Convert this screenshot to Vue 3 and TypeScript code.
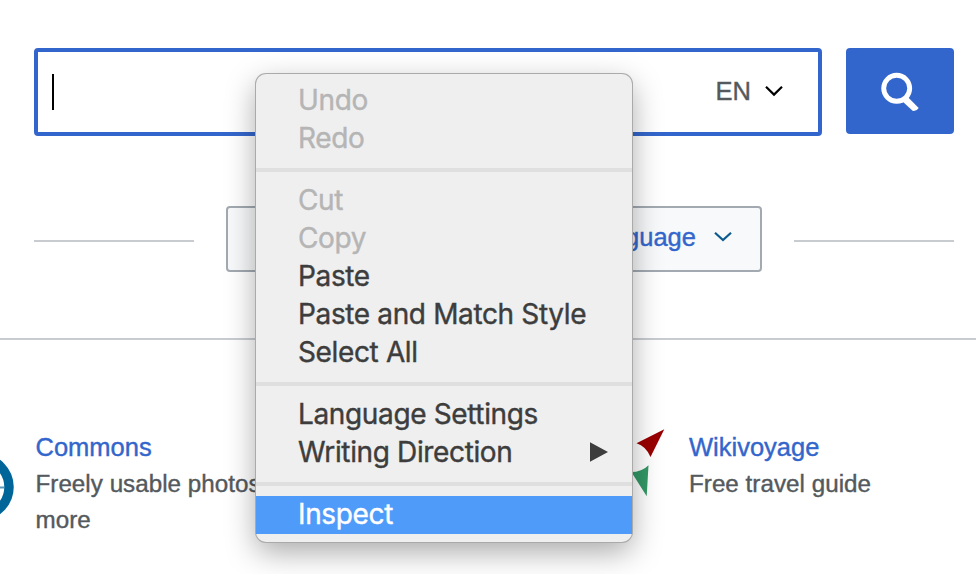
<script setup lang="ts">
interface MenuItem {
  label: string
  state?: 'disabled' | 'active'
  submenu?: boolean
}

const groups: MenuItem[][] = [
  [
    { label: 'Undo', state: 'disabled' },
    { label: 'Redo', state: 'disabled' },
  ],
  [
    { label: 'Cut', state: 'disabled' },
    { label: 'Copy', state: 'disabled' },
    { label: 'Paste' },
    { label: 'Paste and Match Style' },
    { label: 'Select All' },
  ],
  [
    { label: 'Language Settings' },
    { label: 'Writing Direction', submenu: true },
  ],
  [{ label: 'Inspect', state: 'active' }],
]
</script>

<template>
  <main class="page">
    <form class="search" @submit.prevent>
      <div class="field">
        <span class="caret"></span>
        <span class="lang">EN</span>
        <svg class="chevron" width="20" height="12" viewBox="0 0 20 12">
          <path d="M2 1.8 10 9.6 18 1.8" />
        </svg>
      </div>
      <button class="submit" type="submit" aria-label="Search">
        <svg width="40" height="40" viewBox="0 0 40 40">
          <circle cx="16.7" cy="17.3" r="13" />
          <path class="handle" d="M22.3 30.2 27.8 26 38.7 36.900Q36.3 40.600 32.600 39.800Z" />
        </svg>
      </button>
    </form>

    <div class="languages">
      <span class="rule"></span>
      <button class="lang-button" type="button">
        <span>language</span>
        <svg class="chevron" width="20" height="12" viewBox="0 0 20 12">
          <path d="M2 1.8 10 9 18 1.8" />
        </svg>
      </button>
      <span class="rule"></span>
    </div>

    <section class="projects">
      <article class="project">
        <svg class="logo commons" width="36" height="72" viewBox="0 0 36 72">
          <circle cx="2" cy="36" r="29" />
          <path d="M14 36.5H26" />
        </svg>
        <div class="text">
          <a class="name">Commons</a>
          <p>Freely usable photos<br />more</p>
        </div>
      </article>
      <article class="project">
        <svg class="logo voyage" width="40" height="72" viewBox="0 0 40 72">
          <path fill="#900" d="M12.500 14.300 40.300 .3 26.500 28Q22 17.300 12.500 14.300Z" />
          <path fill="#396" d="M4 43Q17 44 24.500 36.300L22.700 67.300 8 44Z" />
        </svg>
        <div class="text">
          <a class="name">Wikivoyage</a>
          <p>Free travel guide</p>
        </div>
      </article>
    </section>

    <nav class="menu">
      <ul v-for="(group, i) in groups" :key="i" class="group">
        <li v-for="item in group" :key="item.label" class="item" :class="item.state">
          <span>{{ item.label }}</span>
          <svg v-if="item.submenu" width="18" height="20" viewBox="0 0 18 20">
            <path d="M0 .3 18 10 0 19.700Z" />
          </svg>
        </li>
      </ul>
    </nav>
  </main>
</template>

<style>
body {
  overflow: hidden;
}
</style>

<style scoped>
.page {
  position: relative;
  box-sizing: border-box;
  width: 976px;
  height: 574px;
  padding-top: 48px;
  overflow: hidden;
  background: #fff;
  color: #54595d;
  font: 25.5px/36px "Liberation Sans", Arial, sans-serif;
  -webkit-text-stroke: 0.4px currentColor;
}
.search {
  display: flex;
  align-items: flex-start;
  gap: 24px;
  padding: 0 22px 0 34px;
}
.field {
  flex: 1;
  box-sizing: border-box;
  height: 88px;
  display: flex;
  align-items: center;
  padding: 0 34px 0 14px;
  border: 4px solid #36c;
  border-radius: 4px;
}
.caret {
  width: 2px;
  height: 36px;
  background: #000;
  margin-right: auto;
}
.lang {
  margin-right: 13px;
  padding-bottom: 2px;
}
.chevron {
  fill: none;
  stroke: #000;
  stroke-width: 2.2;
}
.field .chevron {
  margin-bottom: 2px;
}
.submit {
  width: 108px;
  height: 86px;
  display: grid;
  place-items: center;
  padding: 0;
  border: 0;
  border-radius: 4px;
  background: #36c;
}
.submit circle {
  fill: none;
  stroke: #fff;
  stroke-width: 4.900;
}
.handle {
  fill: #fff;
}
.languages {
  display: flex;
  align-items: center;
  gap: 32px;
  margin: 70px 22px 0 34px;
}
.rule {
  flex: 1;
  height: 2px;
  margin-top: 3px;
  background: #c8ccd1;
}
.lang-button {
  box-sizing: border-box;
  width: 536px;
  height: 66px;
  display: flex;
  align-items: center;
  justify-content: flex-end;
  gap: 17px;
  padding: 0 27px 4px 0;
  border: 2px solid #a2a9b1;
  border-radius: 4px;
  background: #f8f9fa;
  color: #36c;
  font: inherit;
}
.lang-button .chevron {
  stroke: #0b5b91;
}
.projects {
  display: flex;
  margin-top: 66px;
  padding-top: 89px;
  border-top: 2px solid #c8ccd1;
}
.project {
  flex: none;
  display: flex;
  width: 374px;
}
.project:first-child {
  width: 624px;
  margin-left: -22px;
}
.logo {
  flex: none;
  margin-right: 21.5px;
}
.commons {
  margin-top: 22px;
}
.commons circle {
  fill: none;
  stroke: #069;
  stroke-width: 9.500;
}
.commons path {
  stroke: #5798b8;
  stroke-width: 2;
}
.voyage {
  margin-left: 22px;
  margin-right: 25px;
  overflow: visible;
}
.name {
  display: block;
  color: #36c;
}
.text p {
  margin: 1px 0 0;
  font-size: 24.2px;
  letter-spacing: 0.03px;
  white-space: nowrap;
}
.menu {
  position: absolute;
  left: 256px;
  top: 74px;
  box-sizing: border-box;
  width: 376px;
  height: 468px;
  padding: 8px 0;
  border-radius: 10px;
  background: #efefef;
  box-shadow: 0 0 0 1px #aaa, 0 10px 30px rgba(0, 0, 0, 0.34);
  color: #3d3d3d;
  font: 28px/38px Inter, sans-serif;
  letter-spacing: -0.36px;
}
.group {
  margin: 0;
  padding: 0;
  list-style: none;
}
.group + .group {
  margin-top: 10px;
  padding-top: 10px;
  border-top: 4px solid #dfdfdf;
}
.item {
  box-sizing: border-box;
  display: flex;
  align-items: center;
  justify-content: space-between;
  height: 38px;
  padding: 0 24px 2px 42px;
  white-space: nowrap;
}
.item svg {
  fill: #3d3d3d;
}
.disabled {
  color: #b5b5b5;
}
.active {
  background: #4e9bfa;
  color: #fff;
}
</style>
